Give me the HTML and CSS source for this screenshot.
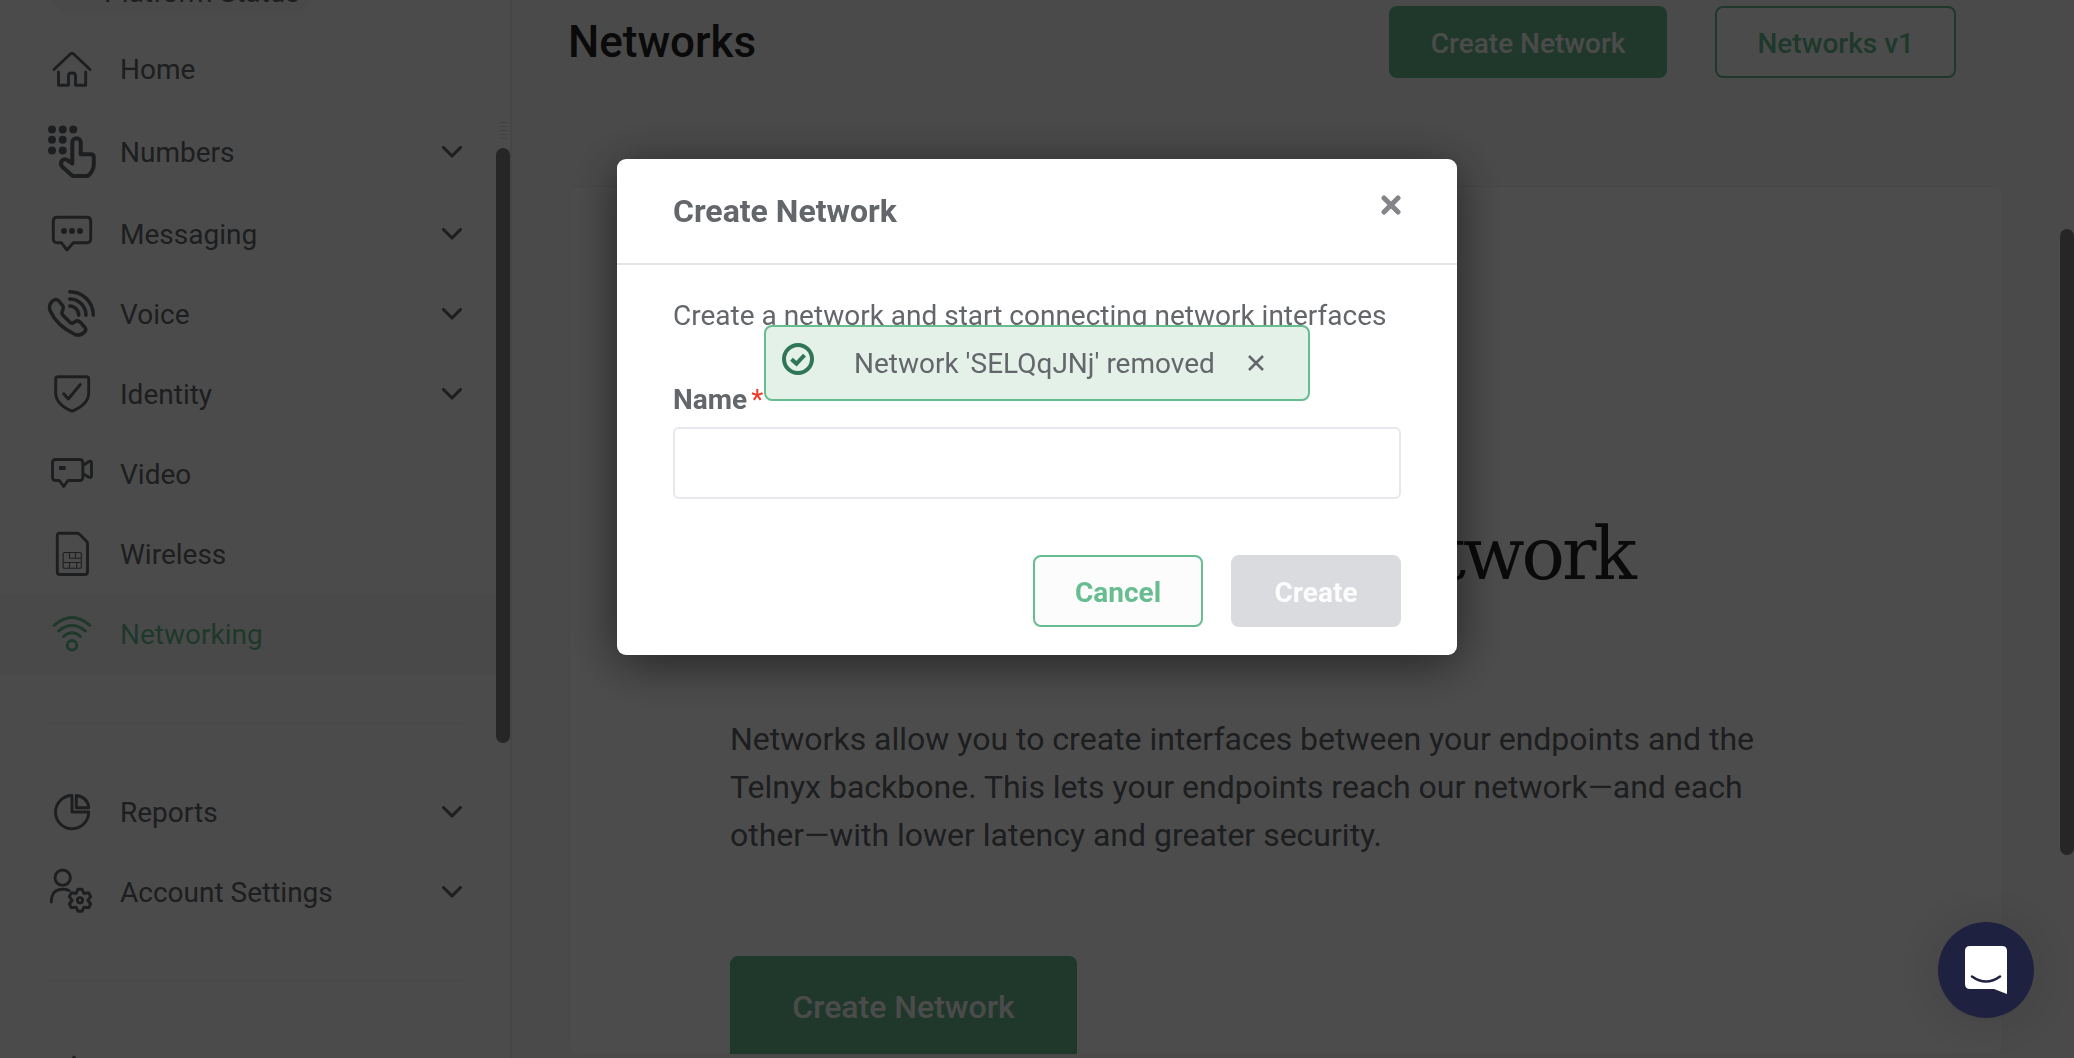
FILE: index.html
```html
<!DOCTYPE html>
<html lang="en">
<head>
<meta charset="utf-8">
<title>Networks</title>
<link rel="stylesheet" href="styles.css">
</head>
<body>
<div class="app">
  <aside class="sidebar">
    <div class="status">Platform Status</div>
    <nav class="nav">
      <a class="item"><svg class="icon" viewBox="0 0 56 56"><path d="M10 28.5L26.6 12.8q1.4-1.2 2.8 0L46 28.5M14.5 31V44.3H24.5V35q0-3 3-3h1q3 0 3 3V44.3H41.7V31"/></svg><span class="label">Home</span></a>
      <a class="item item-tall"><svg class="icon icon-bold" viewBox="0 0 56 56"><g class="solid"><circle cx="8" cy="5.5" r="4"/><circle cx="18.7" cy="5.5" r="4"/><circle cx="29.3" cy="5.5" r="4"/><circle cx="8" cy="15.8" r="4"/><circle cx="18.7" cy="15.8" r="4"/><circle cx="8" cy="26.5" r="4"/><circle cx="18.7" cy="26.5" r="4"/></g><path d="M28.3 39.5V18.5a4.2 4.2 0 0 1 8.4 0V30.3H46.500q3.300 0 3.300 3.300V40Q49.800 47 43.800 52H28.700L18.500 43Q15.500 39.500 18 36.700Q20.500 34 24 36.500Z"/></svg><span class="label">Numbers</span><svg class="chevron" viewBox="0 0 20 12"><path d="M1.500 1.500L10 10L18.500 1.500"/></svg></a>
      <a class="item"><svg class="icon" viewBox="0 0 56 56"><path d="M13.300 11.300H42.700q4 0 4 4V32.700q0 4-4 4H29.300L23 44L17.300 36.700H13.300q-4 0-4-4V15.300q0-4 4-4Z"/><g class="solid"><circle cx="20" cy="25" r="3"/><circle cx="28" cy="25" r="3"/><circle cx="36" cy="25" r="3"/></g></svg><span class="label">Messaging</span><svg class="chevron" viewBox="0 0 20 12"><path d="M1.500 1.500L10 10L18.500 1.500"/></svg></a>
      <a class="item"><svg class="icon icon-mid" viewBox="0 0 56 56"><path d="M25.700 5.700A23.600 23.600 0 0 1 49.300 29.300M25.700 13A16.300 16.300 0 0 1 42 29.300M25.700 20A9.200 9.200 0 0 1 34.700 29.300M14.500 14.500L18.800 19.800Q20 21.500 19 23.500L18 26Q17.500 27.500 18.800 29L26 36.300Q28 38 30 36.300Q33.500 33.500 36 36L41 41.500Q42.500 43.500 41 45.500Q36.500 50.500 31 48.500Q13 40 6 24.500Q4.500 19 8 15.500Q11.500 12 14.500 14.500Z"/></svg><span class="label">Voice</span><svg class="chevron" viewBox="0 0 20 12"><path d="M1.500 1.500L10 10L18.500 1.500"/></svg></a>
      <a class="item"><svg class="icon" viewBox="0 0 56 56"><path d="M14 10.800H42.400q2.300 0 2.300 2.300V27Q44.700 38 29 44.800q-1 .4-2 0Q11.700 38 11.700 27V13.100q0-2.300 2.300-2.300ZM19.700 27.800L24.300 33L36.300 18.500"/></svg><span class="label">Identity</span><svg class="chevron" viewBox="0 0 20 12"><path d="M1.500 1.500L10 10L18.500 1.500"/></svg></a>
      <a class="item"><svg class="icon" viewBox="0 0 56 56"><path d="M11.800 13.500H35.500q3.300 0 3.300 3.300V31.200q0 3.300-3.300 3.300H24L19.700 40.500L15.300 34.500H11.800q-3.300 0-3.300-3.300V16.800q0-3.300 3.300-3.300ZM39 19.500L44.500 15.700q3-1.500 3 1.500V29.500q0 3-3 1.500L39 27.700"/><path class="solid" d="M15 20h6.700v4H15Z"/></svg><span class="label">Video</span></a>
      <a class="item"><svg class="icon" viewBox="0 0 56 56"><path d="M15.500 7.300H33q1.500 0 2.500 1L42.500 15.300q1 1 1 2.500V46q0 2.500-2.500 2.500H15.800q-2.500 0-2.500-2.500V9.800q0-2.500 2.200-2.500Z"/><path class="fine" d="M20.500 26.500H36q1.300 0 1.300 1.300V41q0 1.300-1.300 1.300H20.500q-1.300 0-1.300-1.300V27.800q0-1.300 1.300-1.300ZM19 36.500H37.300M25.500 26.500V32.200H37.300M31.500 26.500V32.200M25.500 36.500V42M32.700 36.500V42"/></svg><span class="label">Wireless</span></a>
      <a class="item item-active"><svg class="icon" viewBox="0 0 56 56"><path d="M10 19.500Q28 3.500 46 19.500M14.500 25Q28 14 41.500 25M19.500 30.500Q28 23 36.500 30.500"/><circle cx="28" cy="39.300" r="4.800"/></svg><span class="label">Networking</span></a>
    </nav>
    <hr class="rule">
    <nav class="nav">
      <a class="item"><svg class="icon" viewBox="0 0 56 56"><path d="M28 11.500A16.600 16.600 0 1 0 44.700 28H28ZM32.300 11.500V23.700H44.700Q43.700 13 32.300 11.500Z"/></svg><span class="label">Reports</span><svg class="chevron" viewBox="0 0 20 12"><path d="M1.500 1.500L10 10L18.500 1.500"/></svg></a>
      <a class="item"><svg class="icon" viewBox="0 0 56 56"><circle cx="18.700" cy="13.700" r="7.700"/><path d="M7.300 38Q7.500 25 19 25.200Q22.500 25.200 25 26.500"/><circle cx="36" cy="36.300" r="2.700"/><path d="M33.900 25.300H38.100L39.900 29.500L44.600 28.800L46.700 32.600L43.800 36.300L46.700 40L44.600 43.800L39.900 43.100L38.100 47.300H33.900L32.100 43.100L27.400 43.800L25.300 40L28.200 36.300L25.300 32.600L27.400 28.800L32.100 29.500Z"/></svg><span class="label">Account Settings</span><svg class="chevron" viewBox="0 0 20 12"><path d="M1.500 1.500L10 10L18.500 1.500"/></svg></a>
    </nav>
    <hr class="rule">
    <nav class="nav"><a class="item"><svg class="icon" viewBox="0 0 56 56"><path d="M30 15L40 36H20Z"/></svg></a></nav>
    <div class="thumb thumb-side"></div>
    <div class="ticks"></div>
  </aside>
  <main class="main">
    <header class="head">
      <h1 class="title">Networks</h1>
      <button class="btn btn-primary">Create Network</button>
      <button class="btn btn-outline">Networks v1</button>
    </header>
    <section class="card">
      <h2 class="hero">Network</h2>
      <p class="lead">Networks allow you to create interfaces between your endpoints and the Telnyx backbone. This lets your endpoints reach our network—and each other—with lower latency and greater security.</p>
      <button class="btn btn-primary btn-large">Create Network</button>
    </section>
    <div class="thumb thumb-main"></div>
  </main>
</div>
<div class="overlay">
  <div class="modal" role="dialog">
    <div class="modal-head">
      <h3 class="modal-title">Create Network</h3>
      <svg class="modal-close" viewBox="0 0 20 20"><path d="M3 3L17 17M17 3L3 17"/></svg>
    </div>
    <div class="modal-body">
      <p class="modal-text">Create a network and start connecting network interfaces</p>
      <label class="field-label" for="name">Name<span class="required">*</span></label>
      <input class="field" id="name" type="text">
      <div class="actions">
        <button class="btn btn-outline btn-cancel">Cancel</button>
        <button class="btn btn-disabled">Create</button>
      </div>
    </div>
  </div>
</div>
<div class="toast">
  <svg class="toast-icon" viewBox="0 0 32 32"><circle cx="16" cy="16" r="14"/><path d="M9.500 16.200L14.500 20.700L22.500 12.200"/></svg>
  <span class="toast-text">Network 'SELQqJNj' removed</span>
  <svg class="toast-close" viewBox="0 0 16 16"><path d="M1 1L15 15M15 1L1 15"/></svg>
</div>
<div class="chat">
  <svg class="chat-icon" viewBox="0 0 42 48"><path class="chat-bubble" d="M5 0H37Q42 0 42 5V48L29 43H5Q0 43 0 38V5Q0 0 5 0Z"/><path class="chat-smile" d="M7 30.500Q21 40.500 35 30.500"/></svg>
</div>
</body>
</html>
```

FILE: styles.css
```css
* { box-sizing: border-box; }
body {
  margin: 0;
  height: 1058px;
  overflow: hidden;
  font-family: Roboto, sans-serif;
  font-size: 28px;
  color: #63666a;
  background: #f9f9f9;
}
h1, h2, h3, p { margin: 0; }

.app { display: flex; height: 1058px; }

/* Sidebar */
.sidebar {
  position: relative;
  flex: 0 0 512px;
  height: 1058px;
  overflow: hidden;
  background: #fafafa;
  border-right: 2px solid #e9e9e9;
}
.status {
  width: 263px;
  height: 42px;
  margin: -29px 0 16px 50px;
  padding-left: 54px;
  border-radius: 21px;
  line-height: 43px;
  white-space: nowrap;
  background: #f4f4f4;
}
.item {
  display: flex;
  align-items: center;
  height: 80px;
  padding: 0 48px 0 44px;
}
.item-tall { height: 85px; }
.item-tall .label { padding-top: 1px; }
.item-tall .chevron { margin-top: 1px; }
.item-active { color: #67bd90; background: #f5f5f5; }
.label { flex: 1; margin-left: 20px; }
.icon {
  width: 56px;
  height: 56px;
  fill: none;
  stroke: currentColor;
  stroke-width: 2.9;
  stroke-linecap: round;
  stroke-linejoin: round;
}
.icon-mid { stroke-width: 3.5; }
.icon-bold { stroke-width: 4; }
.icon .solid { fill: currentColor; stroke: none; }
.icon .fine { stroke-width: 1.1; }
.chevron {
  width: 20px;
  height: 12px;
  fill: none;
  stroke: currentColor;
  stroke-width: 3.1;
  stroke-linecap: round;
  stroke-linejoin: round;
}
.rule {
  width: 414px;
  height: 2px;
  margin: 48px 0 48px 48px;
  border: 0;
  background: #f1f1f1;
}
.thumb {
  position: absolute;
  right: 0;
  width: 14px;
  border-radius: 7px;
  background: #7f7f7f;
}
.thumb-side { top: 148px; height: 595px; }
.thumb-main { top: 229px; height: 626px; }
.ticks {
  position: absolute;
  right: 3px;
  top: 122px;
  width: 7px;
  height: 20px;
  background: repeating-linear-gradient(#dedede 0 1px, transparent 1px 4px);
}

/* Page */
.main {
  position: relative;
  flex: 1;
  display: flex;
  flex-direction: column;
  padding: 6px 72px 4px 58px;
}
.head {
  display: flex;
  gap: 48px;
  flex: 0 0 72px;
  padding-right: 46px;
}
.title {
  flex: 1;
  margin-left: -2px;
  line-height: 72px;
  font-size: 44px;
  font-weight: 500;
  color: #222;
}
.btn {
  height: 72px;
  padding: 4px 40px 0;
  border: 2px solid #67bd90;
  border-radius: 8px;
  font: 700 28px/1 Roboto, sans-serif;
  white-space: nowrap;
}
.head .btn { font-weight: 500; }
.btn-primary { color: #fbfbfb; background: #6dbb92; }
.btn-outline { color: #67bd90; background: #fcfcfc; }
.card {
  flex: 1;
  min-height: 0;
  margin-top: 109px;
  padding: 317px 160px 0;
  overflow: hidden;
  border-radius: 8px;
  background: #fff;
  box-shadow: 0 0 3px rgba(0, 0, 0, .08);
}
.hero {
  width: 904px;
  font: 400 72px/100px "DejaVu Serif", serif;
  letter-spacing: -3px;
  white-space: nowrap;
  text-align: right;
  color: #222;
}
.lead {
  width: 1060px;
  margin-top: 111px;
  font-size: 32px;
  line-height: 48px;
}
.btn-large {
  width: 347px;
  height: 104px;
  margin-top: 97px;
  padding-top: 0;
  padding-bottom: 2px;
  font-size: 32px;
  font-weight: 500;
}

/* Dialog */
.overlay {
  position: fixed;
  inset: 0;
  display: flex;
  justify-content: center;
  align-items: flex-start;
  padding-top: 159px;
  background: rgba(0, 0, 0, .7);
}
.modal {
  width: 840px;
  height: 496px;
  border-radius: 9px;
  background: #fff;
  box-shadow: 0 8px 50px rgba(0, 0, 0, .55);
}
.modal-head {
  display: flex;
  justify-content: space-between;
  height: 106px;
  padding: 0 56px;
  border-bottom: 2px solid #e3e4e5;
}
.modal-title { font-size: 32px; line-height: 104px; font-weight: 700; }
.modal-close {
  width: 20px;
  height: 20px;
  margin-top: 36px;
  fill: none;
  stroke: #838589;
  stroke-width: 5;
  stroke-linecap: round;
}
.modal-body { padding: 30px 56px 28px; }
.modal-text { line-height: 42px; white-space: nowrap; }
.field-label {
  display: flex;
  gap: 4px;
  margin-top: 42px;
  line-height: 42px;
  font-weight: 700;
}
.required { font-weight: 400; color: #ee3a26; }
.field {
  display: block;
  width: 100%;
  height: 72px;
  margin-top: 6px;
  border: 2px solid #e7e8ed;
  border-radius: 6px;
  background: #fff;
}
.actions {
  display: flex;
  justify-content: flex-end;
  gap: 28px;
  margin-top: 56px;
}
.actions .btn { width: 170px; }
.btn-disabled { color: #fcfcfc; border-color: #dadbdf; background: #dadbdf; }

/* Notification */
.toast {
  position: fixed;
  left: 764px;
  top: 325px;
  width: 546px;
  height: 76px;
  display: flex;
  align-items: center;
  padding: 0 44px 0 16px;
  border: 2px solid #67bd90;
  border-radius: 8px;
  background: #e4f1e8;
}
.toast-icon {
  width: 32px;
  height: 32px;
  margin-bottom: 8px;
  fill: none;
  stroke: #2f7558;
  stroke-width: 4;
}
.toast-text { flex: 1; margin-left: 40px; white-space: nowrap; }
.toast-close { width: 16px; height: 16px; fill: none; stroke: #63666a; stroke-width: 2.6; }

/* Chat launcher */
.chat {
  position: fixed;
  left: 1938px;
  top: 922px;
  width: 96px;
  height: 96px;
  display: flex;
  justify-content: center;
  align-items: center;
  border-radius: 50%;
  background: #1f2140;
  box-shadow: 0 2px 70px rgba(0, 0, 0, .16), 0 2px 12px rgba(0, 0, 0, .06);
}
.chat-icon { width: 42px; height: 48px; }
.chat-bubble { fill: #fff; }
.chat-smile { fill: none; stroke: #1f2140; stroke-width: 2.6; stroke-linecap: round; }
```
